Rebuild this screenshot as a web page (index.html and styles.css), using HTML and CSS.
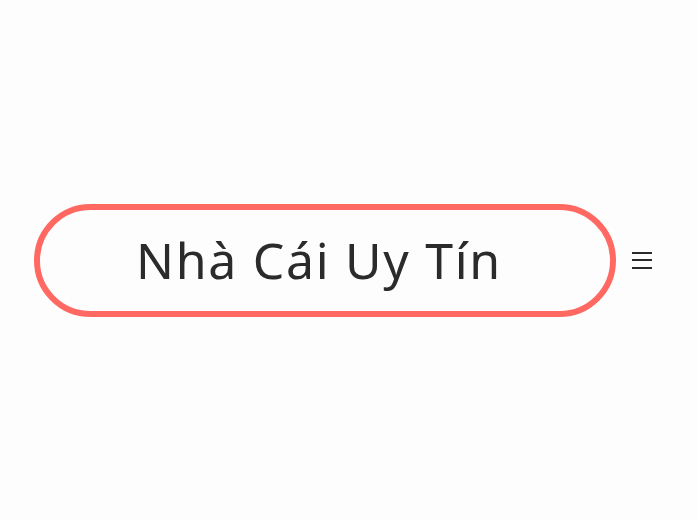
FILE: index.html
```html
<!DOCTYPE html>
<html lang="vi">
<head>
<meta charset="utf-8">
<link rel="stylesheet" href="styles.css">
</head>
<body>
<div class="page">
  <header class="bar">
    <div class="brand"><span class="brand-text">Nhà Cái Uy Tín</span></div>
    <button class="menu" aria-label="Menu">
      <span></span><span></span><span></span>
    </button>
  </header>
</div>
</body>
</html>
```
FILE: styles.css
```css
html, body {
  margin: 0;
  padding: 0;
  background: #fdfdfd;
}
.page {
  height: 520px;
  display: flex;
  align-items: center;
}
.bar {
  display: flex;
  align-items: center;
  padding-left: 34px;
}
.brand {
  box-sizing: border-box;
  width: 582px;
  height: 113px;
  border: 6px solid #ff6962;
  border-radius: 57px;
  display: flex;
  align-items: center;
  justify-content: center;
}
.brand-text {
  font-family: "Noto Sans", sans-serif;
  font-size: 50px;
  color: #2b2b2b;
  letter-spacing: 1.7px;
  padding-right: 12px;
}
.menu {
  margin-left: 16px;
  width: 20px;
  height: 17px;
  padding: 0;
  border: 0;
  background: none;
  display: flex;
  flex-direction: column;
  justify-content: space-between;
}
.menu span {
  display: block;
  height: 2px;
  background: #2b2b2b;
}
```
